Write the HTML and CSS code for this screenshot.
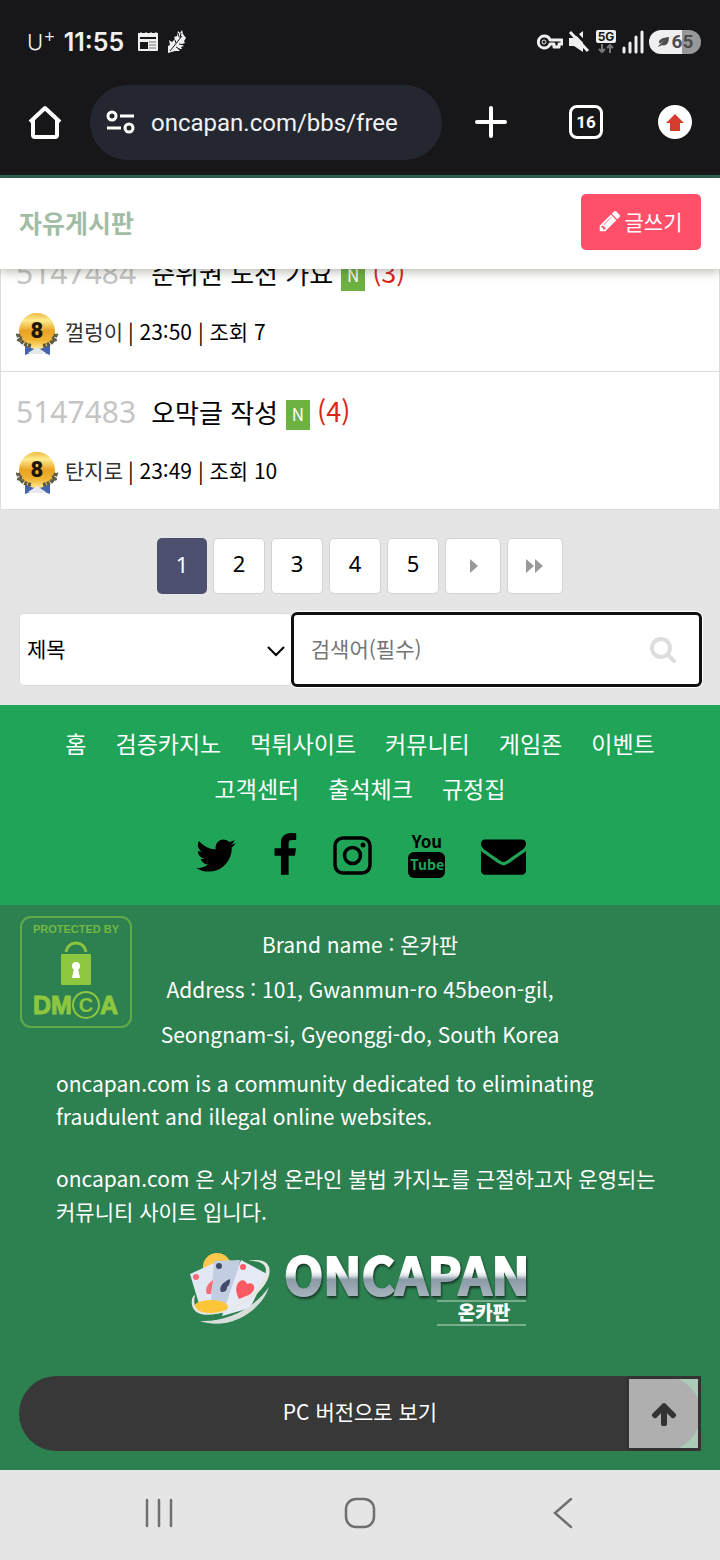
FILE: index.html
```html
<!DOCTYPE html>
<html lang="ko">
<head>
    <meta charset="UTF-8">
    <meta name="viewport" content="width=device-width, initial-scale=1.0">
    <title>자유게시판</title>
    <link rel="stylesheet" href="styles.css">
</head>
<body>
    <!-- Phone status bar -->
    <div class="status-bar">
        <div class="status-left">
            <span class="carrier">U<sup>+</sup></span>
            <span class="clock">11:55</span>
            <svg class="status-note" width="22" height="22" viewBox="0 0 22 22">
                <path d="M1 2h2l1-1 1 1h3l1-1 1 1h3l1-1 1 1h3l1-1 1 1h1v17a1 1 0 0 1-1 1H2a1 1 0 0 1-1-1z" fill="#efefef"/>
                <path d="M3 6h16v2H3zM3 11h8v7H3z" fill="#17171a"/>
                <path d="M12 11h7M12 14h7M12 17h7" stroke="#77777a"/>
            </svg>
            <svg width="20" height="24" viewBox="0 0 20 24">
                <path d="M1 23v-7l2-1-1-5 3 2 3-3-1-2 3-1 1-5 2 2 2-3 1 4 3 4-2 3 1 2-3 1 2 2-3 1 1 2-4 0 2 2-5 0z" fill="#efefef"/>
                <path d="M3 21L15 6M11 3l1 4M14 3l-1 5M9 17l5 3M12 14l5 1M8 10l1 3" stroke="#17171a" fill="none"/>
            </svg>
        </div>
        <div class="status-right">
            <svg width="26" height="16" viewBox="0 0 26 16">
                <path d="M7 2a6 6 0 1 0 6 8h4v3h5v-3h3V6H13a6 6 0 0 0-6-4z" fill="none" stroke="#efefef" stroke-width="3" stroke-linejoin="round"/>
                <circle cx="7" cy="8" r="2" fill="#17171a" stroke="#efefef" stroke-width="1"/>
            </svg>
            <svg width="22" height="22" viewBox="0 0 22 22">
                <path d="M1 7h5l9-7v21l-9-6H1z" fill="#efefef"/>
                <path d="M6 0l17 18" stroke="#17171a" stroke-width="3"/>
                <path d="M2 1l18 19" stroke="#efefef" stroke-width="3"/>
            </svg>
            <svg width="22" height="26" viewBox="0 0 22 26">
                <rect x="1" y="1" width="20" height="13" rx="2" fill="#efefef"/>
                <text x="11" y="12" text-anchor="middle" class="label-5g">5G</text>
                <path d="M7 15v8M4 20l3 3 3-3M15 24v-8M12 19l3-3 3 3" fill="none" stroke="#77777a" stroke-width="2"/>
            </svg>
            <svg width="22" height="24" viewBox="0 0 22 24">
                <path d="M2 18v4M8 13v9M14 7v15M20 2v20" stroke="#efefef" stroke-width="3" stroke-linecap="round"/>
            </svg>
            <div class="battery">
                <svg width="13" height="10" viewBox="0 0 13 12">
                    <path d="M13 0C6 1 2 2 1 6l1 2 6-4-7 6-1 2 4-2c6 1 9-2 9-10z" fill="#4c4c4e"/>
                </svg>
                <span>65</span>
            </div>
        </div>
    </div>

    <!-- Browser bar -->
    <div class="browser-bar">
        <button class="icon-button" aria-label="Home">
            <svg width="36" height="36" viewBox="0 0 36 36">
                <path d="M3 18L18 4l15 14M6 16v15a2 2 0 0 0 2 2h20a2 2 0 0 0 2-2V16" fill="none" stroke="#fff" stroke-width="4" stroke-linejoin="round"/>
            </svg>
        </button>
        <div class="address">
            <svg width="30" height="26" viewBox="0 0 30 26">
                <g fill="none" stroke="#fff" stroke-width="3">
                    <circle cx="7" cy="7" r="4"/>
                    <circle cx="24" cy="19" r="4"/>
                    <path d="M15 7h14M2 19h14"/>
                </g>
            </svg>
            <input class="url" type="text" value="oncapan.com/bbs/free" aria-label="URL">
        </div>
        <button class="icon-button new-tab" aria-label="New tab">
            <svg width="32" height="32" viewBox="0 0 32 32">
                <path d="M16 2v28M2 16h28" stroke="#fff" stroke-width="4" stroke-linecap="round"/>
            </svg>
        </button>
        <button class="icon-button tab-count" aria-label="Tabs">16</button>
        <button class="icon-button update" aria-label="Update">
            <svg width="34" height="34" viewBox="0 0 34 34">
                <circle cx="17" cy="17" r="17" fill="#fff"/>
                <path d="M17 9l9 9h-4v8H12v-8H8z" fill="#d23d2d"/>
            </svg>
        </button>
    </div>

    <!-- Board title -->
    <header class="board-header">
        <h1>자유게시판</h1>
        <a class="write-button" href="#">
            <svg width="24" height="24" viewBox="0 0 1792 1792">
                <path fill="#fff" d="M491 1536l91-91-235-235-91 91v107h128v128h107zm523-928q0-22-22-22-10 0-17 7l-542 542q-7 7-7 17 0 22 22 22 10 0 17-7l542-542q7-7 7-17zm-54-192l416 416-832 832h-416v-416zm683 96q0 53-37 90l-166 166-416-416 166-165q36-38 90-38 53 0 91 38l235 234q37 39 37 91z"/>
            </svg>
            글쓰기
        </a>
    </header>

    <!-- Post list -->
    <main>
        <ul class="post-list">
            <li>
                <div class="post-subject">
                    <span class="post-number">5147484</span>
                    <a href="#">순위권 도전 가요</a>
                    <span class="new-mark">N</span>
                    <span class="comment-count">(3)</span>
                </div>
                <div class="post-info">
                    <svg class="medal" width="44" height="44" viewBox="0 0 44 44">
                        <use href="#medal"/>
                    </svg>
                    <span class="author">껄렁이</span> <span>| 23:50 | 조회 7</span>
                </div>
            </li>
            <li>
                <div class="post-subject">
                    <span class="post-number">5147483</span>
                    <a href="#">오막글 작성</a>
                    <span class="new-mark">N</span>
                    <span class="comment-count">(4)</span>
                </div>
                <div class="post-info">
                    <svg class="medal" width="44" height="44" viewBox="0 0 44 44">
                        <defs>
                            <linearGradient id="gold" x1="0" y1="0" x2="0" y2="1">
                                <stop offset="0" stop-color="#f0b840"/>
                                <stop offset="0.2" stop-color="#fdec90"/>
                                <stop offset="0.5" stop-color="#e9a222"/>
                                <stop offset="0.75" stop-color="#f0b432"/>
                                <stop offset="1" stop-color="#fdea90"/>
                            </linearGradient>
                            <g id="medal">
                                <path d="M9 33h25v11l-8-3h-9l-8 3z" fill="#4564ae"/>
                                <circle cx="21" cy="20" r="18" fill="url(#gold)"/>
                                <path d="M2 23c2 8 6 11 14 12M40 23c-2 8-6 11-14 12" fill="none" stroke="#5c5a46" stroke-width="4" stroke-dasharray="3 1"/>
                                <path d="M0 23l6 4M1 29l7 2M42 23l-6 4M41 29l-7 2" stroke="#62604c" stroke-width="2"/>
                                <path d="M12 42l9-6 9 6-4 1h-10z" fill="#e6e9ec"/>
                                <text x="21" y="27" text-anchor="middle" class="medal-text">8</text>
                            </g>
                        </defs>
                        <use href="#medal"/>
                    </svg>
                    <span class="author">탄지로</span> <span>| 23:49 | 조회 10</span>
                </div>
            </li>
        </ul>

        <nav class="pagination" aria-label="Pages">
            <strong class="current">1</strong>
            <a href="#">2</a>
            <a href="#">3</a>
            <a href="#">4</a>
            <a href="#">5</a>
            <a class="arrow" href="#" aria-label="다음">
                <svg width="10" height="14" viewBox="0 0 10 14"><path d="M2 0l8 7-8 7z" fill="#999"/></svg>
            </a>
            <a class="arrow" href="#" aria-label="맨끝">
                <svg width="18" height="14" viewBox="0 0 18 14"><path d="M0 0l8 7-8 7zM9 0l8 7-8 7z" fill="#999"/></svg>
            </a>
        </nav>

        <form class="search-form">
            <div class="select-box">
                <select aria-label="검색대상">
                    <option>제목</option>
                </select>
                <svg class="chevron" width="18" height="12" viewBox="0 0 18 12">
                    <path d="M1 2l8 8 8-8" fill="none" stroke="#000" stroke-width="2"/>
                </svg>
            </div>
            <div class="keyword-box">
                <input type="text" placeholder="검색어(필수)" aria-label="검색어">
                <button class="search-button" type="button" aria-label="검색">
                    <svg width="28" height="28" viewBox="0 0 1792 1792">
                        <path fill="#ddd" d="M1216 832q0-185-131.5-316.5t-316.5-131.5-316.5 131.5-131.5 316.5 131.5 316.5 316.5 131.5 316.5-131.5 131.5-316.5zm512 832q0 52-38 90t-90 38q-54 0-90-38l-343-342q-179 124-399 124-143 0-273.5-55.5t-225-150-150-225-55.5-273.5 55.5-273.5 150-225 225-150 273.5-55.5 273.5 55.5 225 150 150 225 55.5 273.5q0 220-124 399l343 343q37 37 37 90z"/>
                    </svg>
                </button>
            </div>
        </form>
    </main>

    <!-- Footer -->
    <footer>
        <div class="footer-menu">
            <nav class="menu-links" aria-label="Menu">
                <a href="#">홈</a>
                <a href="#">검증카지노</a>
                <a href="#">먹튀사이트</a>
                <a href="#">커뮤니티</a>
                <a href="#">게임존</a>
                <a href="#">이벤트</a>
                <a href="#">고객센터</a>
                <a href="#">출석체크</a>
                <a href="#">규정집</a>
            </nav>
            <div class="social">
                <a href="#" aria-label="Twitter">
                    <svg width="42" height="45" viewBox="64 0 1664 1792">
                        <path d="M1684 408q-67 98-162 167 1 14 1 42 0 130-38 259.5t-115.5 248.5-184.5 210.5-258 146-323 54.5q-271 0-496-145 35 4 78 4 225 0 401-138-105-2-188-64.5t-114-159.5q33 5 61 5 43 0 85-11-112-23-185.5-111.5t-73.5-205.5v-4q68 38 146 41-66-44-105-115t-39-154q0-88 44-163 121 149 294.5 238.5t371.5 99.5q-8-38-8-74 0-134 94.5-228.5t228.5-94.5q140 0 236 102 109-21 205-78-37 115-142 178 93-10 186-50z"/>
                    </svg>
                </a>
                <a href="#" aria-label="Facebook">
                    <svg width="26" height="45" viewBox="384 0 1024 1792">
                        <path d="M1343 12v264h-157q-86 0-116 36t-30 108v189h293l-39 296h-254v759h-306v-759h-255v-296h255v-218q0-186 104-288.5t277-102.5q147 0 228 12z"/>
                    </svg>
                </a>
                <a href="#" aria-label="Instagram">
                    <svg width="39" height="45" viewBox="0 0 39 45">
                        <rect x="2" y="5" width="35" height="35" rx="8" fill="none" stroke="#000" stroke-width="3.500"/>
                        <circle cx="19.500" cy="22.500" r="8" fill="none" stroke="#000" stroke-width="3.500"/>
                        <circle cx="30" cy="12" r="2.500"/>
                    </svg>
                </a>
                <a href="#" aria-label="YouTube">
                    <svg class="youtube" width="39" height="45" viewBox="0 0 39 45">
                        <rect x="1" y="19" width="37" height="26" rx="6"/>
                        <text x="20" y="15" text-anchor="middle" class="you">You</text>
                        <text x="20" y="37" text-anchor="middle" class="tube">Tube</text>
                    </svg>
                </a>
                <a href="#" aria-label="Mail">
                    <svg width="45" height="45" viewBox="0 0 1792 1792">
                        <path d="M1792 710v794q0 66-47 113t-113 47h-1472q-66 0-113-47t-47-113v-794q44 49 101 87 362 246 497 345 57 42 92.500 65.500t94.500 48 110 24.500h2q51 0 110-24.500t94.500-48 92.500-65.500q170-123 498-345 57-39 100-87zm0-294q0 79-49 151t-122 123q-376 261-468 325-10 7-42.500 31t-54 38.500-52 32.500-57.500 27-50 9h-2q-23 0-50-9t-57.500-27-52-32.500-54-38.500-42.500-31q-91-64-262-182.500t-205-142.500q-62-42-117-115.500t-55-136.500q0-78 41.500-130t118.500-52h1472q65 0 112.500 47t47.500 113z"/>
                    </svg>
                </a>
            </div>
        </div>

        <div class="footer-info">
            <svg class="dmca" width="114" height="114" viewBox="0 0 114 114">
                <rect x="2" y="2" width="110" height="110" rx="10" fill="none" stroke="#62aa47" stroke-width="2"/>
                <text x="57" y="18" text-anchor="middle" class="dmca-small">PROTECTED BY</text>
                <path d="M47 37c2-12 18-12 20 0" fill="none" stroke="#8dc63f" stroke-width="3"/>
                <rect x="42" y="39" width="30" height="31" rx="1" fill="#8dc63f"/>
                <circle cx="57" cy="51" r="4" fill="#fff"/>
                <path d="M55 53h4l2 10h-8z" fill="#fff"/>
                <text x="14" y="99" class="dmca-big">DM</text>
                <text x="67" y="97" text-anchor="middle" class="dmca-c">C</text>
                <circle cx="67" cy="90" r="13" fill="none" stroke="#8dc63f" stroke-width="2"/>
                <text x="99" y="99" text-anchor="end" class="dmca-big">A</text>
            </svg>
            <p class="company">
                Brand name : 온카판<br>
                Address : 101, Gwanmun-ro 45beon-gil,<br>
                Seongnam-si, Gyeonggi-do, South Korea
            </p>
            <div class="about">
                <p>oncapan.com is a community dedicated to eliminating fraudulent and illegal online websites.</p>
                <p>oncapan.com 은 사기성 온라인 불법 카지노를 근절하고자 운영되는 커뮤니티 사이트 입니다.</p>
            </div>

            <svg class="logo" width="344" height="84" viewBox="0 0 344 84">
                <defs>
                    <linearGradient id="silver" gradientUnits="userSpaceOnUse" x1="0" y1="8" x2="0" y2="49">
                        <stop offset="0.4" stop-color="#fff"/>
                        <stop offset="0.5" stop-color="#dde3e7"/>
                        <stop offset="0.6" stop-color="#8b9ba8"/>
                        <stop offset="1" stop-color="#a5b3bb"/>
                    </linearGradient>
                    <filter id="logo-shadow" x="-5%" y="-5%" width="110%" height="120%">
                        <feDropShadow dx="1" dy="2" stdDeviation="1" flood-color="#0c2418" flood-opacity="0.8"/>
                    </filter>
                </defs>
                <circle cx="29" cy="20" r="14" fill="#fdc84b"/>
                <path d="M2 27l24-11 8 46-20 5z" fill="#e2e7f4"/>
                <path d="M26 14l26-1-5 52-25 2z" fill="#c3cde2"/>
                <path d="M53 13l26 14-17 34-28 8z" fill="#e6eaf6"/>
                <path d="M25 33c-7 5-8 10-6 14h4z" fill="#fa6b75"/>
                <circle cx="8" cy="30" r="3" fill="#fa6b75"/>
                <path d="M42 32c-9 4-11 9-9 13 5 0 6-2 6-5 3-2 3-5 3-8z" fill="#424b69"/>
                <circle cx="31" cy="19" r="3" fill="#424b69"/>
                <circle cx="55" cy="20" r="3" fill="#f75c66"/>
                <path d="M50 36c4-5 8-2 9 1 5-2 8 1 7 5-2 6-8 7-15 10-3-6-4-11-1-16z" fill="#fc5961"/>
                <ellipse cx="23" cy="60" rx="17" ry="7" fill="#fdc638"/>
                <path d="M60 14c30-6 26 20 5 36C42 67 8 76 4 58c-1-6 1-9 3-10-3 14 3 18 15 18 30 1 70-42 51-50-3-2-8-2-13-2z" fill="#e6e7e3"/>
                <path d="M81 40c-8 25-41 44-69 34 28 1 54-13 69-34z" fill="#d8dfda"/>
                <text x="96" y="48" class="logo-text" filter="url(#logo-shadow)">ONCAPAN</text>
                <path d="M249 54h89M249 78h89" stroke="#c4d9cc" stroke-width="1"/>
                <text x="296" y="73" text-anchor="middle" class="logo-korean">온카판</text>
            </svg>

            <div class="bottom-bar">
                <a class="pc-version" href="#">PC 버전으로 보기</a>
                <button class="top-button" aria-label="상단으로">
                    <svg width="28" height="28" viewBox="0 0 1792 1792">
                        <path fill="#333" d="M1675 971q0 51-37 90l-75 75q-38 38-91 38-54 0-90-38l-294-293v704q0 52-37.500 84.500t-90.500 32.500h-128q-53 0-90.500-32.500t-37.500-84.500v-704l-294 293q-36 38-90 38t-90-38l-75-75q-38-38-38-90 0-53 38-91l651-651q35-37 90-37 54 0 91 37l651 651q37 39 37 91z"/>
                    </svg>
                </button>
            </div>
        </div>
    </footer>

    <!-- Phone navigation -->
    <div class="phone-nav">
        <button class="icon-button" aria-label="Recents">
            <svg width="32" height="32" viewBox="0 0 32 32"><path d="M5 3v26M17 3v26M29 3v26" stroke="#707070" stroke-width="2.500" stroke-linecap="round"/></svg>
        </button>
        <button class="icon-button" aria-label="Home">
            <svg width="32" height="32" viewBox="0 0 32 32"><rect x="2" y="2" width="28" height="28" rx="10" fill="none" stroke="#707070" stroke-width="2.500"/></svg>
        </button>
        <button class="icon-button" aria-label="Back">
            <svg width="32" height="32" viewBox="0 0 32 32"><path d="M25 2L9 16l16 14" fill="none" stroke="#707070" stroke-width="2.500" stroke-linecap="round"/></svg>
        </button>
    </div>
</body>
</html>
```
FILE: styles.css
```css
* {
    box-sizing: border-box;
}
body {
    margin: 0;
    background-color: #e5e5e5;
    color: #000;
    font-family: "Noto Sans CJK KR", sans-serif;
    font-size: 21px;
}
a {
    color: inherit;
    text-decoration: none;
}
svg {
    display: block;
    flex-shrink: 0;
}
button, input, select {
    font-family: inherit;
    font-size: 21px;
}
.icon-button {
    display: flex;
    padding: 0;
    border: none;
    background: none;
}

/* Status bar */
.status-bar {
    display: flex;
    justify-content: space-between;
    align-items: center;
    height: 84px;
    padding: 0 19px 0 27px;
    background-color: #17171a;
    color: #efefef;
    font-family: Inter, sans-serif;
}
.status-left, .status-right {
    display: flex;
    align-items: center;
}
.status-left {
    gap: 8px;
}
.status-right {
    gap: 5px;
}
.carrier {
    font-size: 22px;
    font-weight: 300;
    line-height: 24px;
}
.carrier sup {
    font-size: 19px;
    line-height: 1px;
}
.clock {
    font-size: 25px;
    font-weight: 600;
}
.status-note {
    margin-left: 5px;
}
.label-5g {
    font-family: Inter, sans-serif;
    font-size: 12px;
    font-weight: 700;
    fill: #17171a;
}
.battery {
    display: flex;
    align-items: center;
    justify-content: center;
    gap: 2px;
    width: 52px;
    height: 24px;
    border-radius: 12px;
    background: linear-gradient(to right, #efefef 64%, #98989a 64%);
    color: #4c4c4e;
    font-family: Roboto, sans-serif;
    font-size: 19px;
    font-weight: 700;
    line-height: 24px;
}

/* Browser bar */
.browser-bar {
    display: flex;
    align-items: center;
    height: 94px;
    padding: 0 28px 15px 27px;
    border-bottom: 3px solid #2c6350;
    background-color: #17171a;
}
.address {
    display: flex;
    align-items: center;
    gap: 16px;
    flex: 1;
    min-width: 0;
    height: 75px;
    margin-left: 27px;
    padding: 0 15px;
    border-radius: 38px;
    background-color: #24272f;
}
.url {
    flex: 1;
    min-width: 0;
    padding: 2px 0 0;
    border: none;
    background: none;
    color: #f1f2f5;
    font-family: Roboto, sans-serif;
    font-size: 24px;
}
.new-tab {
    margin-left: 33px;
}
.tab-count {
    align-items: center;
    justify-content: center;
    width: 34px;
    height: 34px;
    margin-left: 62px;
    border: 3px solid #fff;
    border-radius: 8px;
    color: #fff;
    font-family: Roboto, sans-serif;
    font-size: 17px;
    font-weight: 700;
}
.update {
    margin-left: 55px;
}

/* Board header */
.board-header {
    position: relative;
    z-index: 1;
    display: flex;
    justify-content: space-between;
    align-items: center;
    height: 91px;
    padding: 0 19px 3px;
    background-color: #fff;
    box-shadow: 0 2px 10px rgba(60, 60, 40, 0.4);
}
.board-header h1 {
    margin: 0;
    color: #a2bda5;
    font-size: 25px;
    font-weight: 700;
}
.write-button {
    display: flex;
    align-items: center;
    justify-content: center;
    gap: 3px;
    width: 120px;
    height: 56px;
    padding: 0 2px 3px 0;
    border-radius: 5px;
    background-color: #ff4f69;
    color: #fff;
}

/* Post list, first row runs under the header */
.post-list {
    margin: -36px 0 0;
    padding: 0;
    border: 1px solid #ddd;
    border-top: none;
    background-color: #fff;
    list-style: none;
}
.post-list li {
    height: 139px;
    padding: 19px 15px;
    border-bottom: 1px solid #ddd;
}
.post-list li:last-child {
    height: 137px;
    border-bottom: none;
}
.post-subject {
    display: flex;
    align-items: center;
    height: 40px;
    font-size: 26px;
}
.post-number {
    margin-right: 15px;
    color: #c5c5c5;
    font-family: "Noto Sans", sans-serif;
    font-size: 30px;
}
.new-mark {
    width: 24px;
    height: 30px;
    margin: 8px 7px 0 8px;
    background-color: #6db142;
    color: #fff;
    font-size: 17px;
    line-height: 28px;
    text-align: center;
}
.comment-count {
    padding-bottom: 2px;
    color: #d9261c;
    font-size: 27px;
}
.post-info {
    display: flex;
    align-items: center;
    gap: 5px;
    height: 44px;
    margin-top: 19px;
    line-height: 40px;
}
.post-info span {
    padding-bottom: 4px;
}
.author {
    color: #333;
}
.medal-text {
    font-family: Roboto, sans-serif;
    font-size: 22px;
    font-weight: 900;
    fill: #1d1608;
}

/* Pagination */
.pagination {
    display: flex;
    justify-content: center;
    gap: 6px;
    margin: 28px 0 19px;
    font-family: "Noto Sans", sans-serif;
    font-size: 22px;
}
.pagination a, .pagination strong {
    display: flex;
    align-items: center;
    justify-content: center;
    width: 52px;
    height: 56px;
    padding-bottom: 6px;
    border: 1px solid #d3d3d3;
    border-radius: 5px;
    background-color: #fff;
}
.pagination .current {
    width: 50px;
    padding-bottom: 4px;
    border: none;
    background-color: #4d4f6e;
    color: #fff;
    font-weight: 400;
}
.pagination .arrow {
    width: 56px;
    padding: 0;
}

/* Search */
.search-form {
    display: flex;
    padding: 0 19px 19px;
}
.select-box, .keyword-box {
    position: relative;
    height: 73px;
}
.select-box {
    width: 40%;
}
.keyword-box {
    width: 60%;
}
.select-box select {
    width: 100%;
    height: 100%;
    padding: 0 7px 4px;
    border: 1px solid #ddd;
    border-radius: 5px;
    background-color: #fff;
    color: #000;
    appearance: none;
}
.chevron {
    position: absolute;
    top: 32px;
    right: 7px;
}
.keyword-box input {
    width: 100%;
    height: 100%;
    padding: 0 64px 4px 18px;
    border: 1px solid #ddd;
    border-radius: 5px;
    outline: 3px solid #101010;
    outline-offset: -2px;
    box-shadow: 0 0 0 2px #fff;
}
.keyword-box input::placeholder {
    color: #757575;
}
.search-button {
    position: absolute;
    top: 22px;
    right: 24px;
    padding: 0;
    border: none;
    background: none;
}

/* Footer menu */
.footer-menu {
    padding: 16px 40px 27px;
    background-color: #20a558;
    color: #fff;
}
.menu-links {
    display: flex;
    flex-wrap: wrap;
    justify-content: center;
    column-gap: 29px;
    font-size: 23px;
    line-height: 45px;
}
.social {
    display: flex;
    justify-content: center;
    gap: 35px;
    margin-top: 22px;
}
.youtube {
    overflow: visible;
}
.you, .tube {
    font-weight: 700;
}
.you {
    font-size: 17px;
}
.tube {
    font-size: 14px;
    fill: #20a558;
}

/* Footer info */
.footer-info {
    position: relative;
    padding: 17px 19px 19px;
    background-color: #2d8050;
    color: #fff;
}
.dmca {
    position: absolute;
    top: 10px;
    left: 19px;
}
.dmca-small, .dmca-big, .dmca-c {
    font-family: "Liberation Sans", sans-serif;
    font-weight: 700;
    fill: #8dc63f;
}
.dmca-small {
    font-size: 11px;
    fill: #74b843;
}
.dmca-big {
    font-size: 25px;
    stroke: #8dc63f;
}
.dmca-c {
    font-size: 20px;
}
.company {
    margin: 0;
    font-size: 21px;
    line-height: 45px;
    text-align: center;
}
.about {
    margin: 10px 37px 0;
    font-size: 21px;
    line-height: 33px;
}
.about p {
    margin: 0 0 29px;
}
.logo {
    margin: -10px auto 0;
}
.logo-text {
    font-size: 51px;
    font-weight: 700;
    fill: url(#silver);
    stroke: url(#silver);
    stroke-width: 2px;
}
.logo-korean {
    font-size: 19px;
    font-weight: 900;
    fill: #fff;
}
.bottom-bar {
    position: relative;
    margin-top: 45px;
}
.pc-version {
    display: block;
    height: 75px;
    border-radius: 38px;
    background-color: #383838;
    line-height: 71px;
    text-align: center;
}
.top-button {
    position: absolute;
    top: 0;
    right: 0;
    display: flex;
    align-items: center;
    justify-content: center;
    width: 75px;
    height: 75px;
    padding: 0;
    border: 3px solid #333;
    background-color: rgba(255, 255, 255, 0.6);
    background-clip: padding-box;
}

/* Phone navigation */
.phone-nav {
    display: flex;
    justify-content: space-between;
    padding: 27px 142px 31px;
    background-color: #e5e5e5;
}
```
